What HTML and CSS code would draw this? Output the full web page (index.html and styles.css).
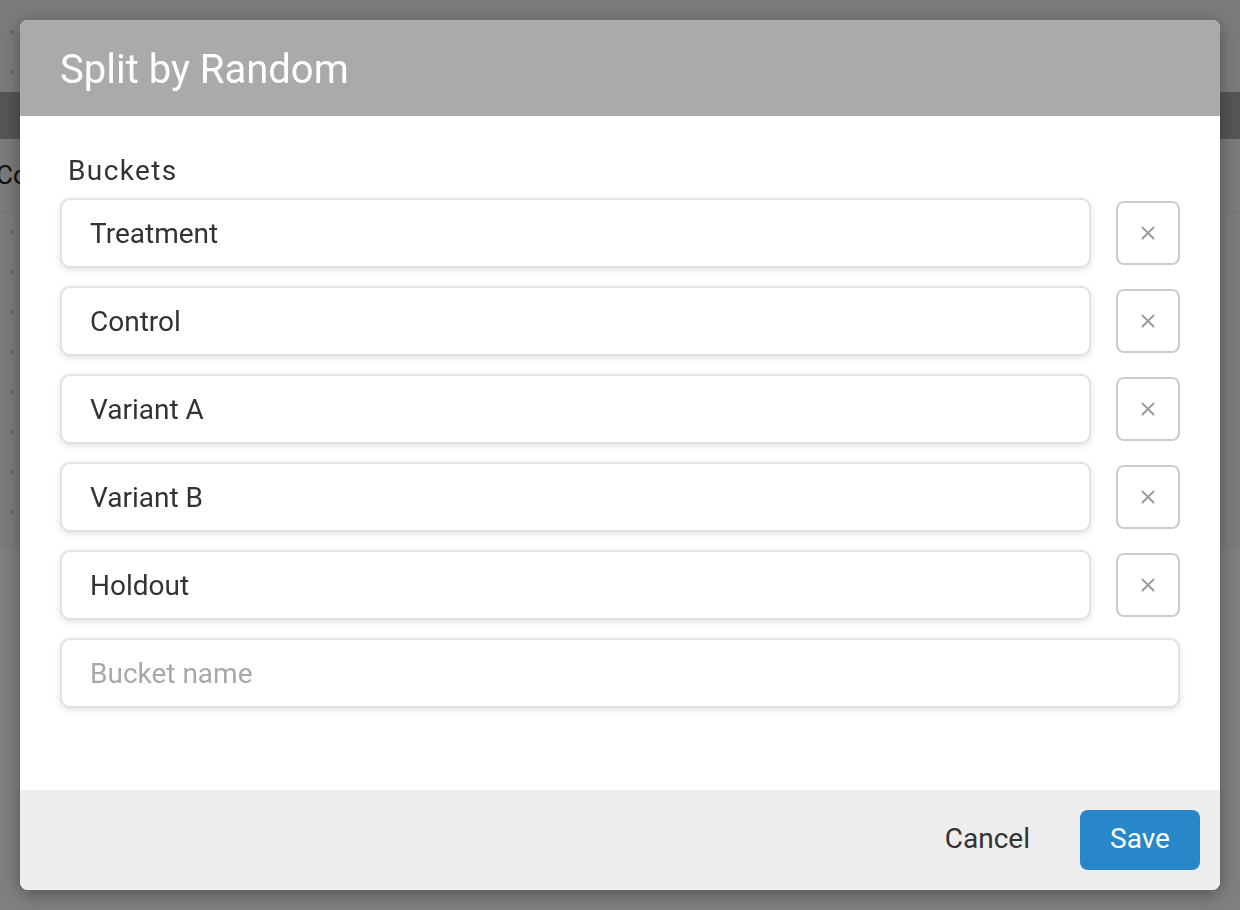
FILE: index.html
```html
<!DOCTYPE html>
<html>
<head>
<meta charset="utf-8">
<link rel="stylesheet" href="styles.css">
</head>
<body>
<div class="page">
  <div class="topbar">
    <div class="dotrow"><span class="dot"></span></div>
    <div class="dotrow"><span class="dot"></span></div>
  </div>
  <div class="band"></div>
  <div class="colhead">Co</div>
  <div class="rows">
    <div class="dotrow"><span class="dot"></span></div>
    <div class="dotrow"><span class="dot"></span></div>
    <div class="dotrow"><span class="dot"></span></div>
    <div class="dotrow"><span class="dot"></span></div>
    <div class="dotrow"><span class="dot"></span></div>
    <div class="dotrow"><span class="dot"></span></div>
    <div class="dotrow"><span class="dot"></span></div>
    <div class="dotrow"><span class="dot"></span></div>
  </div>
</div>
<div class="overlay"></div>
<div class="modal">
  <div class="modal-header">Split by Random</div>
  <div class="modal-body">
    <div class="label">Buckets</div>
    <div class="bucket-row">
      <input class="field" type="text" value="Treatment">
      <button class="remove" type="button"><svg viewBox="0 0 16 16" width="16" height="16"><path d="M2 2L14 14M14 2L2 14" stroke="#999" stroke-width="1.8" fill="none"/></svg></button>
    </div>
    <div class="bucket-row">
      <input class="field" type="text" value="Control">
      <button class="remove" type="button"><svg viewBox="0 0 16 16" width="16" height="16"><path d="M2 2L14 14M14 2L2 14" stroke="#999" stroke-width="1.8" fill="none"/></svg></button>
    </div>
    <div class="bucket-row">
      <input class="field" type="text" value="Variant A">
      <button class="remove" type="button"><svg viewBox="0 0 16 16" width="16" height="16"><path d="M2 2L14 14M14 2L2 14" stroke="#999" stroke-width="1.8" fill="none"/></svg></button>
    </div>
    <div class="bucket-row">
      <input class="field" type="text" value="Variant B">
      <button class="remove" type="button"><svg viewBox="0 0 16 16" width="16" height="16"><path d="M2 2L14 14M14 2L2 14" stroke="#999" stroke-width="1.8" fill="none"/></svg></button>
    </div>
    <div class="bucket-row">
      <input class="field" type="text" value="Holdout">
      <button class="remove" type="button"><svg viewBox="0 0 16 16" width="16" height="16"><path d="M2 2L14 14M14 2L2 14" stroke="#999" stroke-width="1.8" fill="none"/></svg></button>
    </div>
    <div class="bucket-row">
      <input class="field" type="text" placeholder="Bucket name">
    </div>
  </div>
  <div class="modal-footer">
    <button class="btn-cancel" type="button">Cancel</button>
    <button class="btn-save" type="button">Save</button>
  </div>
</div>
</body>
</html>
```

FILE: styles.css
```css
html, body {
  margin: 0;
  padding: 0;
  width: 1240px;
  height: 910px;
  overflow: hidden;
  font-family: Roboto, "Liberation Sans", sans-serif;
  background: #ffffff;
}

.page {
  width: 1240px;
  height: 910px;
}

.topbar {
  height: 92px;
  background: #f6f6f6;
  padding-top: 12px;
  box-sizing: border-box;
}

.dotrow {
  height: 40px;
  display: flex;
  align-items: center;
  padding-left: 10px;
}

.dot {
  width: 4px;
  height: 4px;
  border-radius: 50%;
  background: #b8d6f0;
}

.band {
  height: 47px;
  background: #aaaaaa;
}

.colhead {
  height: 73px;
  background: #f4f4f4;
  border-bottom: 1px solid #e6e6e6;
  box-sizing: border-box;
  font-size: 26px;
  color: #222;
  line-height: 73px;
  padding-left: 0;
  margin-left: -4px;
}

.rows {
  height: 338px;
  background: #f6f6f6;
  box-sizing: border-box;
  overflow: hidden;
}

.overlay {
  position: fixed;
  inset: 0;
  background: rgba(0, 0, 0, 0.5);
}

.modal {
  position: fixed;
  left: 20px;
  top: 20px;
  width: 1200px;
  height: 870px;
  background: #ffffff;
  border-radius: 8px;
  overflow: hidden;
  box-shadow: 0 4px 18px rgba(0, 0, 0, 0.35);
  display: flex;
  flex-direction: column;
}

.modal-header {
  height: 96px;
  box-sizing: border-box;
  padding-top: 4px;
  background: #aaaaaa;
  color: #ffffff;
  font-size: 40px;
  line-height: 92px;
  padding-left: 40px;
  flex: none;
}

.modal-body {
  flex: 1;
  padding: 39px 40px 0 40px;
}

.label {
  font-size: 28px;
  letter-spacing: 1.4px;
  color: #333333;
  padding-left: 8px;
  line-height: 32px;
  margin-bottom: 11px;
}

.bucket-row {
  display: flex;
  align-items: center;
  gap: 25px;
  margin-bottom: 18px;
}

.field {
  flex: 1;
  height: 70px;
  box-sizing: border-box;
  border: 2px solid #e2e2e2;
  border-radius: 10px;
  box-shadow: 0 2px 6px rgba(0, 0, 0, 0.12);
  padding: 0 0 0 28px;
  font-family: Roboto, "Liberation Sans", sans-serif;
  font-size: 28px;
  color: #333333;
  background: #ffffff;
  outline: none;
  margin: 0;
}

.field::placeholder {
  color: #a8a8a8;
}

.remove {
  width: 64px;
  height: 64px;
  flex: none;
  box-sizing: border-box;
  border: 2px solid #cccccc;
  border-radius: 8px;
  background: #ffffff;
  display: flex;
  align-items: center;
  justify-content: center;
  padding: 0;
  margin: 0;
}

.remove svg {
  display: block;
}

.modal-footer {
  height: 100px;
  flex: none;
  background: #eeeeee;
  display: flex;
  align-items: center;
  justify-content: flex-end;
  padding-right: 20px;
  gap: 30px;
}

.btn-cancel {
  background: transparent;
  border: none;
  font-family: Roboto, "Liberation Sans", sans-serif;
  font-size: 28px;
  color: #333333;
  padding: 0 20px 4px 20px;
  height: 60px;
}

.btn-save {
  width: 120px;
  height: 60px;
  background: #2787c9;
  color: #ffffff;
  border: none;
  border-radius: 8px;
  font-family: Roboto, "Liberation Sans", sans-serif;
  font-size: 28px;
  padding: 0 0 4px 0;
}
```
